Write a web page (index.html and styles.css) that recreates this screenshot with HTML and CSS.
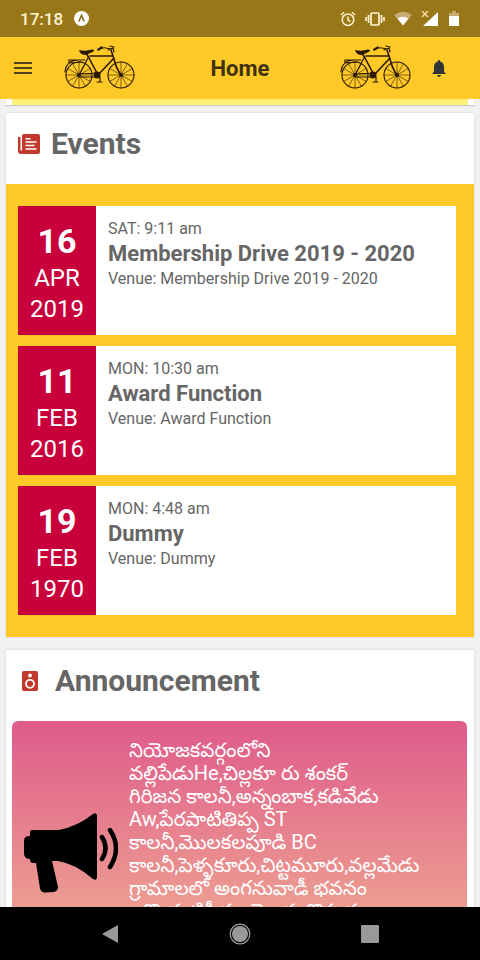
FILE: index.html
```html
<!DOCTYPE html>
<html lang="en">
<head>
<meta charset="utf-8">
<meta name="viewport" content="width=device-width, initial-scale=1">
<title>Home</title>
<link rel="stylesheet" href="styles.css">
</head>
<body>
<svg class="defs" aria-hidden="true">
  <symbol id="bike" viewBox="0 0 72 46">
    <g fill="none" stroke="#2b1805" stroke-linecap="round" stroke-linejoin="round">
      <g stroke-width="1.1">
        <circle cx="15" cy="30" r="13"/>
        <circle cx="57" cy="30" r="13"/>
      </g>
      <g stroke-width=".6">
        <path d="M15 17v26M2 30h26M8.500 18.700l13 22.600M21.500 18.700l-13 22.600M3.700 23.500l22.600 13M26.300 23.500l-22.600 13"/>
        <path d="M57 17v26M44 30h26M50.500 18.700l13 22.600M63.500 18.700l-13 22.600M45.700 23.500l22.600 13M68.300 23.500l-22.600 13"/>
      </g>
      <path stroke-width="1.600" d="M22 8l3 5 9 17M26 11h23M50 13L35 29M47 5l3 9q2 9 7 16"/>
      <path stroke-width="1.200" d="M15 30l9-17M15 29l20-1M15 32h19M5 15h16M5 15v3l13-1M1 27q1-12 14-12"/>
      <path stroke-width="1.200" d="M44 5l5-2 1 4M34 5q5-3 8-2l5 1M50 2l-4-1M36 32v5M33 37h5"/>
    </g>
    <g fill="#2b1805">
      <path d="M15 5q7 1.500 13-.5 3 0 1.500 2l-7.500 3.500q-6 0-7-5z"/>
      <circle cx="15" cy="30" r="2"/><circle cx="57" cy="30" r="2"/>
      <circle cx="33" cy="30" r="3.500"/>
      <path d="M33 4l5-3 1 2-5 3z"/>
    </g>
  </symbol>
</svg>

<div class="screen">
  <div class="status">
    <span class="clock">17:18</span>
    <svg width="15" height="15" viewBox="0 0 15 15"><circle cx="7.500" cy="7.500" r="7.500" fill="#fff"/><path d="M4.800 10.500l2.700-6 2.700 6" fill="none" stroke="#8a6c18" stroke-width="1.600"/></svg>
    <div class="status-icons">
      <svg width="16" height="16" viewBox="0 0 16 16" fill="none" stroke="#fff3d2" stroke-width="1.500"><circle cx="8" cy="8.700" r="5.800"/><path d="M8 5.500v3.700l2.500 1.500M1 4l3-2.700M15 4l-3-2.700"/></svg>
      <svg width="20" height="16" viewBox="0 0 20 16" fill="none" stroke="#fff3d2" stroke-width="1.700"><rect x="6" y="2" width="8" height="12" rx="1"/><path d="M3.500 4v8M1 6v4M16.500 4v8M19 6v4"/></svg>
      <svg width="18" height="16" viewBox="0 0 18 16"><path d="M0 4q9-6.500 18 0L9 14.500z" fill="#c4ab70"/><path d="M3.500 7.500q5.500-3.500 11 0L9 14.500z" fill="#fff"/></svg>
      <svg width="18" height="16" viewBox="0 0 18 16"><path d="M17 1v14H2z" fill="#fff"/><path d="M0 0h8v7H0z" fill="#987718"/><path d="M1 0l6 6M7 0L1 6" stroke="#ffd9a8" stroke-width="1.400"/></svg>
      <svg width="12" height="16" viewBox="0 0 12 16"><path d="M1 2h3V0h4v2h3v4H1z" fill="#c4ab70"/><path d="M1 5h10v10H1z" fill="#fff"/></svg>
    </div>
  </div>

  <header class="appbar">
    <button class="icon-btn" aria-label="Menu"><svg width="18" height="12" viewBox="0 0 18 12"><path d="M0 1h18M0 6h18M0 11h18" stroke="#4f4014" stroke-width="1.800"/></svg></button>
    <svg class="bike bike-left" viewBox="0 0 72 46" aria-hidden="true"><use href="#bike"/></svg>
    <h1>Home</h1>
    <svg class="bike bike-right" viewBox="0 0 72 46" aria-hidden="true"><use href="#bike"/></svg>
    <button class="icon-btn" aria-label="Notifications"><svg width="14" height="17" viewBox="0 0 14 17" fill="#30343a"><path d="M7 0q1.200 0 1.200 1.400Q12 2.500 12 7v4.500l2 2.500H0l2-2.500V7q0-4.500 3.800-5.600Q5.800 0 7 0zM5.200 15h3.600q0 2-1.800 2t-1.800-2z"/></svg></button>
  </header>

  <main>
    <div class="previous-card"></div>

    <section class="card">
      <div class="card-head">
        <svg width="22" height="20" viewBox="0 0 22 20"><path d="M6 0h14q2 0 2 2v16q0 2-2 2H3q-3 0-3-3V3h2.500v13.500h1.500V2q0-2 2-2z" fill="#c0392b"/><path d="M7.500 4.800h5M7.500 8h11M7.500 11.500h9M7.500 15h11" stroke="#fff" stroke-width="1.500"/></svg>
        <h2>Events</h2>
      </div>
      <div class="events">
        <article class="event">
          <div class="date"><strong>16</strong><span>APR</span><span>2019</span></div>
          <div class="info"><p>SAT: 9:11 am</p><h3>Membership Drive 2019 - 2020</h3><p>Venue: Membership Drive 2019 - 2020</p></div>
        </article>
        <article class="event">
          <div class="date"><strong>11</strong><span>FEB</span><span>2016</span></div>
          <div class="info"><p>MON: 10:30 am</p><h3>Award Function</h3><p>Venue: Award Function</p></div>
        </article>
        <article class="event">
          <div class="date"><strong>19</strong><span>FEB</span><span>1970</span></div>
          <div class="info"><p>MON: 4:48 am</p><h3>Dummy</h3><p>Venue: Dummy</p></div>
        </article>
      </div>
    </section>

    <section class="card">
      <div class="card-head announce-head">
        <svg width="16" height="20" viewBox="0 0 16 20"><rect width="16" height="20" rx="2" fill="#c0392b"/><circle cx="8" cy="4.500" r="1.900" fill="#fff"/><circle cx="8" cy="12.800" r="4" fill="none" stroke="#fff" stroke-width="1.800"/></svg>
        <h2>Announcement</h2>
      </div>
      <div class="notice">
        <svg class="megaphone" width="94" height="80" viewBox="0 0 94 80" aria-hidden="true"><path d="M8 17h27Q54 13 69 1q4-2 4 2v61q0 4-4 2Q52 51 34 48h-6l6 26q0 4-4 5l-9 .500q-4 0-5-4L12 50H9q-3 0-3-4-6 0-6-6V28q0-5 6-5v-4q0-2 2-2z"/><path d="M78 24q7 11 0 22M86 17q12 18 0 37" fill="none" stroke="#000" stroke-width="4.500" stroke-linecap="round"/></svg>
        <p lang="te">నియోజకవర్గంలోని<br>వల్లిపేడుHe,చిల్లకూ రు శంకర్<br>గిరిజన కాలనీ,అన్నంబాక,కడివేడు<br>Aw,పేరపాటితిప్ప ST<br>కాలనీ,మొలకలపూడి BC<br>కాలనీ,పెళ్ళకూరు,చిట్టమూరు,వల్లమేడు<br>గ్రామాలలో అంగనువాడీ భవనం<br>ఒక్కొక్కటికీ రూ.నె ఇరు కొరు ర</p>
      </div>
    </section>
  </main>

  <nav class="navbar">
    <button aria-label="Back"><svg width="18" height="20" viewBox="0 0 18 20"><path d="M1 10L17 1v18z" fill="#999"/></svg></button>
    <button aria-label="Home"><svg width="22" height="22" viewBox="0 0 22 22"><circle cx="11" cy="11" r="8" fill="#999"/><circle cx="11" cy="11" r="9.800" fill="none" stroke="#999" stroke-width="1.300"/></svg></button>
    <button aria-label="Recent apps"><svg width="18" height="18" viewBox="0 0 18 18"><rect width="18" height="18" rx="1" fill="#999"/></svg></button>
  </nav>
</div>
</body>
</html>
```
FILE: styles.css
```css
* {
  box-sizing: border-box;
}

body,
h1,
h2,
h3,
p {
  margin: 0;
}

body {
  font-family: Roboto, "Noto Sans Telugu", "Noto Sans", sans-serif;
  color: #666;
}

svg {
  display: block;
  flex: none;
}

button {
  display: flex;
  align-items: center;
  justify-content: center;
  padding: 0;
  border: 0;
  background: none;
}

.defs {
  position: absolute;
  width: 0;
  height: 0;
}

.screen {
  display: flex;
  flex-direction: column;
  height: 100vh;
  background: #f1f1f3;
}

.status {
  display: flex;
  flex: none;
  align-items: center;
  gap: 11px;
  height: 37px;
  padding: 0 20px;
  background: #987718;
  color: #fff3d2;
}

.clock {
  font-size: 17px;
  font-weight: 500;
}

.status-icons {
  display: flex;
  gap: 9px;
  margin-left: auto;
}

.appbar {
  display: flex;
  flex: none;
  align-items: center;
  height: 62px;
  padding: 0 34px 0 14px;
  background: #ffca28;
}

.bike {
  width: 72px;
  height: 46px;
}

.bike-left {
  margin-left: 32px;
}

.bike-right {
  margin-right: 20px;
}

h1 {
  flex: 1;
  padding-left: 4px;
  font-size: 22px;
  font-weight: 700;
  text-align: center;
  color: #40320f;
}

main {
  flex: 1;
  min-height: 0;
  padding: 0 6px;
  overflow: hidden;
}

.previous-card {
  height: 6px;
  margin-bottom: 8px;
  border: solid #fff;
  border-width: 0 6px;
  background: #fff176;
  box-shadow: 0 1px 1px #ccc;
}

.card {
  margin-bottom: 13px;
  background: #fff;
  box-shadow: 0 0 2px #ccc;
}

.card-head {
  display: flex;
  align-items: center;
  gap: 11px;
  height: 71px;
  padding: 0 12px 9px;
}

.announce-head {
  gap: 17px;
  padding-left: 16px;
}

h2 {
  font-size: 30px;
  line-height: 36px;
}

.events {
  display: grid;
  gap: 11px;
  padding: 22px 18px 22px 12px;
  background: #ffca28;
}

.event {
  display: flex;
  min-height: 129px;
  background: #fff;
}

.date {
  display: flex;
  flex: none;
  flex-direction: column;
  align-items: center;
  width: 78px;
  padding-top: 14px;
  background: #c8003c;
  color: #fff;
  font-size: 24px;
  line-height: 31px;
}

.date strong {
  font-size: 34px;
  line-height: 43px;
}

.info {
  padding: 12px;
  font-size: 16px;
  line-height: 22px;
}

h3 {
  font-size: 22px;
  line-height: 28px;
}

.notice {
  display: flex;
  align-items: center;
  gap: 11px;
  height: 264px;
  margin: 0 7px 8px 6px;
  padding: 0 12px;
  border-radius: 6px;
  background: linear-gradient(#df5b8b, #eda091 75%, #f1b294);
}

.notice p {
  align-self: flex-start;
  padding-top: 18px;
  font-size: 20px;
  line-height: 23px;
  white-space: nowrap;
  color: #fff;
}

.navbar {
  display: flex;
  flex: none;
  align-items: center;
  justify-content: space-between;
  height: 53px;
  padding: 0 21%;
  background: #000;
}
```
